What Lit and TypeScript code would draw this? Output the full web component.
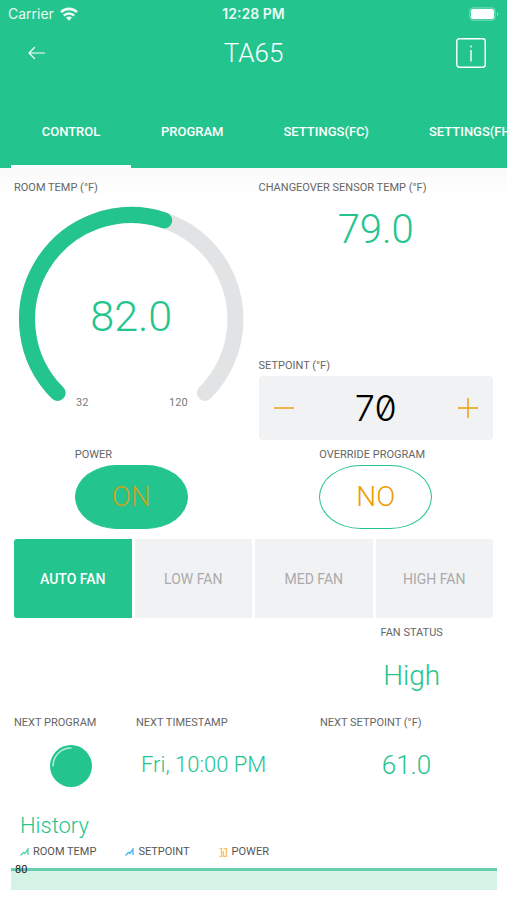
import { LitElement, html, css, svg } from "lit";
import { customElement, property, state } from "lit/decorators.js";
import { classMap } from "lit/directives/class-map.js";

@customElement("temp-gauge")
class TempGauge extends LitElement {
  @property({ type: Number }) value = 82;
  @property({ type: Number }) min = 32;
  @property({ type: Number }) max = 120;

  static styles = css`
    :host { display: block; }
    svg { display: block; width: 100%; max-width: 360px; margin: 0 auto; }
    .track, .fill { fill: none; stroke-width: 16; stroke-linecap: round; }
    .track { stroke: #e1e3e5; }
    .fill { stroke: #24c48e; }
    .value { font: 300 43px Roboto, sans-serif; fill: #24c48e; text-anchor: middle; }
    .limit { font: 400 11px Roboto, sans-serif; fill: #7b7b7b; text-anchor: middle; }
  `;

  private point(fraction: number) {
    const a = ((-135 + 270 * fraction) * Math.PI) / 180;
    return `${(117 + 104 * Math.sin(a)).toFixed(2)} ${(113 - 104 * Math.cos(a)).toFixed(2)}`;
  }

  render() {
    const f = (this.value - this.min) / (this.max - this.min);
    const large = f * 270 > 180 ? 1 : 0;
    return html`<svg viewBox="0 0 234 206" role="img" aria-label="Room temperature">
      ${svg`
        <path class="track" d="M${this.point(0)}A104 104 0 1 1 ${this.point(1)}"/>
        <path class="fill" d="M${this.point(0)}A104 104 0 ${large} 1 ${this.point(f)}"/>
        <text class="value" x="117" y="125">${this.value.toFixed(1)}</text>
        <text class="limit" x="68" y="200">${this.min}</text>
        <text class="limit" x="164" y="200">${this.max}</text>`}
    </svg>`;
  }
}

@customElement("app-root")
class AppRoot extends LitElement {
  @state() private tab = 0;
  @state() private fan = 0;
  @state() private setpoint = 70;
  @state() private power = true;
  @state() private override = false;

  static styles = css`
    :host {
      display: block;
      min-height: 100vh;
      background: #fff;
      color: #666;
      font-family: Roboto, sans-serif;
      font-size: 11px;
      line-height: 16px;
    }
    * { box-sizing: border-box; }
    button, input { font: inherit; color: inherit; border: 0; margin: 0; padding: 0; background: none; }
    button { cursor: pointer; }
    header { background: #24c48e; color: #fff; }
    .status {
      display: grid;
      grid-template-columns: 1fr auto 1fr;
      align-items: center;
      height: 28px;
      padding: 0 8px;
      font-family: Inter, sans-serif;
      font-size: 14px;
    }
    .carrier { display: flex; align-items: center; gap: 6px; opacity: 0.9; }
    .time { font-weight: 600; font-size: 14px; opacity: 0.9; }
    .battery { justify-self: end; }
    svg { display: block; }
    .nav {
      display: grid;
      grid-template-columns: 1fr auto 1fr;
      align-items: center;
      height: 50px;
      padding: 0 21px;
    }
    .back { justify-self: start; padding: 6px; }
    .info { justify-self: end; }
    h1 { margin: 0; font-size: 26px; line-height: 32px; font-weight: 300; }
    .tabs {
      display: flex;
      padding: 18px 0 0 11px;
      overflow: hidden;
    }
    .tab {
      flex: none;
      height: 72px;
      min-width: 120px;
      padding: 0 30px;
      font-size: 13px;
      font-weight: 500;
      border-block: 3px solid transparent;
    }
    .tab.active { border-bottom-color: #fff; }
    main {
      display: block;
      padding: 12px 14px 0;
      background: linear-gradient(#fafafa, #fff 32px);
    }
    .label { display: block; font-size: 11px; line-height: 16px; font-weight: 400; color: #666; }
    .pair { display: grid; grid-template-columns: repeat(2, minmax(0, 1fr)); column-gap: 10px; }
    .col { display: flex; flex-direction: column; min-height: 260px; }
    temp-gauge { margin-top: 10px; }
    .big {
      margin: 10px 0 0;
      font-size: 40px;
      line-height: 48px;
      font-weight: 300;
      text-align: center;
      color: #24c48e;
    }
    .push { margin-top: auto; }
    .stepper {
      display: flex;
      align-items: center;
      justify-content: space-between;
      height: 64px;
      margin-top: 2px;
      border-radius: 4px;
      background: #f1f2f4;
    }
    .step { display: grid; flex: none; place-items: center; width: 50px; height: 64px; }
    .number {
      flex: 1;
      min-width: 0;
      height: 64px;
      text-align: center;
      color: #000;
      font-family: Inter, sans-serif;
      font-size: 36px;
      line-height: 48px;
      font-weight: 300;
      font-feature-settings: "zero";
    }
    .switches { margin-top: 7px; justify-items: center; }
    .toggle {
      display: block;
      width: 113px;
      height: 64px;
      margin-top: 2px;
      border: 1px solid #24c48e;
      border-radius: 42px / 32px;
      color: #ed9d00;
      font-size: 28px;
      font-weight: 300;
    }
    .toggle.on { background: #24c48e; color: #c9a51c; }
    .fans { display: grid; grid-template-columns: repeat(4, 1fr); gap: 3px; margin-top: 10px; }
    .fan {
      height: 79px;
      background: #f1f2f4;
      color: #aaa;
      font-size: 14px;
    }
    .fan:first-child { border-radius: 3px 0 0 3px; }
    .fan:last-child { border-radius: 0 3px 3px 0; }
    .fan.active { background: #24c48e; color: #fff; font-weight: 500; }
    .fan-status { display: grid; grid-template-columns: repeat(4, 1fr); gap: 3px; margin-top: 7px; }
    .fan-cell { grid-column: 4; justify-self: start; padding-left: 5px; }
    .mid { margin: 18px 0 0; font-size: 28px; line-height: 34px; font-weight: 300; text-align: center; color: #24c48e; }
    .next { display: grid; grid-template-columns: 114fr 176fr 173fr; column-gap: 8px; margin-top: 22px; }
    .next-value { margin: 16px 0 0; font-size: 22px; line-height: 36px; font-weight: 300; color: #24c48e; }
    .stamp { padding-left: 5px; white-space: nowrap; }
    .center { text-align: center; font-size: 26px; }
    .led { display: block; margin: 14px auto 0; }
    h2 { margin: 25px 0 0 6px; font-size: 22px; line-height: 28px; font-weight: 300; color: #24c48e; }
    .legend { display: flex; gap: 29px; margin: 4px 0 0 6px; padding: 0; list-style: none; }
    .legend li { display: flex; align-items: center; gap: 4px; color: #555; }
    .legend svg { stroke-width: 1.4; }
    .chart {
      position: relative;
      height: 22px;
      margin: 8px -4px 0 -3px;
      border-top: 3px solid #67cfaf;
      background: #d5f2e7;
    }
    .tick { position: absolute; left: 4px; top: -9px; color: #222; }
  `;

  private tabs = ["CONTROL", "PROGRAM", "SETTINGS(FC)", "SETTINGS(FH)"];
  private fans = ["AUTO FAN", "LOW FAN", "MED FAN", "HIGH FAN"];

  render() {
    return html`
      <header>
        <div class="status">
          <span class="carrier">Carrier
            <svg width="18" height="14" viewBox="0 0 18 14" fill="none" stroke="#fff" stroke-width="2.6">
              <path d="M1 5.2a11.3 11.3 0 0 1 16 0"/>
              <path d="M3.8 8.6a7.4 7.4 0 0 1 10.4 0"/>
              <path d="M9 13.8 6 10.8a4.2 4.2 0 0 1 6 0Z" fill="#fff" stroke="none"/>
            </svg>
          </span>
          <span class="time">12:28 PM</span>
          <svg class="battery" width="30" height="14" viewBox="0 0 30 14">
            <rect x="0.5" y="0.5" width="26" height="13" rx="4" fill="#fff" fill-opacity="0.2" stroke="#fff" stroke-opacity="0.2"/>
            <rect x="2" y="2" width="23" height="10" rx="2.6" fill="#fff"/>
            <path d="M28 5v4a2.2 2.2 0 0 0 0-4Z" fill="#fff" fill-opacity="0.45"/>
          </svg>
        </div>
        <div class="nav">
          <button class="back" aria-label="Back">
            <svg width="19" height="14" viewBox="0 0 19 14" fill="none" stroke="#fff" stroke-width="1.2" stroke-linecap="round" stroke-linejoin="round">
              <path d="M17.500 7H2M7.500 1.500 2 7l5.500 5.500"/>
            </svg>
          </button>
          <h1>TA65</h1>
          <button class="info" aria-label="Information">
            <svg width="30" height="30" viewBox="0 0 30 30" fill="none" stroke="#fff" stroke-width="1.4">
              <rect x="0.8" y="0.8" width="28.4" height="28.4" rx="2.5"/>
              <path d="M15 12V23.500M15 7.500V9.500"/>
            </svg>
          </button>
        </div>
        <nav class="tabs" role="tablist">
          ${this.tabs.map((t, i) => html`
            <button role="tab" aria-selected=${i === this.tab ? "true" : "false"}
              class=${classMap({ tab: true, active: i === this.tab })}
              @click=${() => (this.tab = i)}>${t}</button>`)}
        </nav>
      </header>
      <main>
        <div class="pair">
          <div class="col">
            <span class="label">ROOM TEMP (°F)</span>
            <temp-gauge .value=${82}></temp-gauge>
          </div>
          <div class="col">
            <span class="label">CHANGEOVER SENSOR TEMP (°F)</span>
            <p class="big">79.0</p>
            <label class="label push" for="setpoint">SETPOINT (°F)</label>
            <div class="stepper">
              <button class="step" aria-label="Decrease" @click=${() => this.setpoint--}>
                <svg width="20" height="20" viewBox="0 0 20 20" stroke="#ed9d00" stroke-width="1.4"><path d="M0 10H20"/></svg>
              </button>
              <input class="number" id="setpoint" type="text" .value=${String(this.setpoint)} />
              <button class="step" aria-label="Increase" @click=${() => this.setpoint++}>
                <svg width="20" height="20" viewBox="0 0 20 20" stroke="#ed9d00" stroke-width="1.4"><path d="M0 10H20M10 0V20"/></svg>
              </button>
            </div>
          </div>
        </div>
        <div class="pair switches">
          <div>
            <label class="label" for="power">POWER</label>
            <button id="power" class=${classMap({ toggle: true, on: this.power })}
              @click=${() => (this.power = !this.power)}>${this.power ? "ON" : "OFF"}</button>
          </div>
          <div>
            <label class="label" for="override">OVERRIDE PROGRAM</label>
            <button id="override" class=${classMap({ toggle: true, on: this.override })}
              @click=${() => (this.override = !this.override)}>${this.override ? "YES" : "NO"}</button>
          </div>
        </div>
        <div class="fans">
          ${this.fans.map((t, i) => html`
            <button class=${classMap({ fan: true, active: i === this.fan })}
              @click=${() => (this.fan = i)}>${t}</button>`)}
        </div>
        <div class="fan-status">
          <div class="fan-cell">
            <span class="label">FAN STATUS</span>
            <p class="mid">High</p>
          </div>
        </div>
        <div class="next">
          <div>
            <span class="label">NEXT PROGRAM</span>
            <svg class="led" width="42" height="42" viewBox="0 0 42 42" fill="none">
              <circle cx="21" cy="21" r="21" fill="#24c48e"/>
              <path d="M3 21A18 18 0 0 1 21 3" stroke="#b5ecd8" stroke-width="1.5" stroke-linecap="round"/>
            </svg>
          </div>
          <div>
            <span class="label">NEXT TIMESTAMP</span>
            <p class="next-value stamp">Fri, 10:00 PM</p>
          </div>
          <div>
            <span class="label">NEXT SETPOINT (°F)</span>
            <p class="next-value center">61.0</p>
          </div>
        </div>
        <h2>History</h2>
        <ul class="legend">
          <li>
            <svg width="9" height="8" viewBox="0 0 9 8" fill="none" stroke="#5fd3ad"><path d="M0.500 7.500 3.500 4.500 5 5.500 8 1V7"/></svg>
            ROOM TEMP
          </li>
          <li>
            <svg width="9" height="8" viewBox="0 0 9 8" fill="none" stroke="#4fb9ee"><path d="M0.500 7.500 3.500 4.500 5 5.500 8 1V7"/></svg>
            SETPOINT
          </li>
          <li>
            <svg width="9" height="9" viewBox="0 0 9 9" fill="none" stroke="#f4c36a"><path d="M0.500 8.500H2.500V0.500H0.500M4.500 0.500H7.500V8.500H4.500V3"/></svg>
            POWER
          </li>
        </ul>
        <div class="chart"><span class="tick">80</span></div>
      </main>
    `;
  }
}
